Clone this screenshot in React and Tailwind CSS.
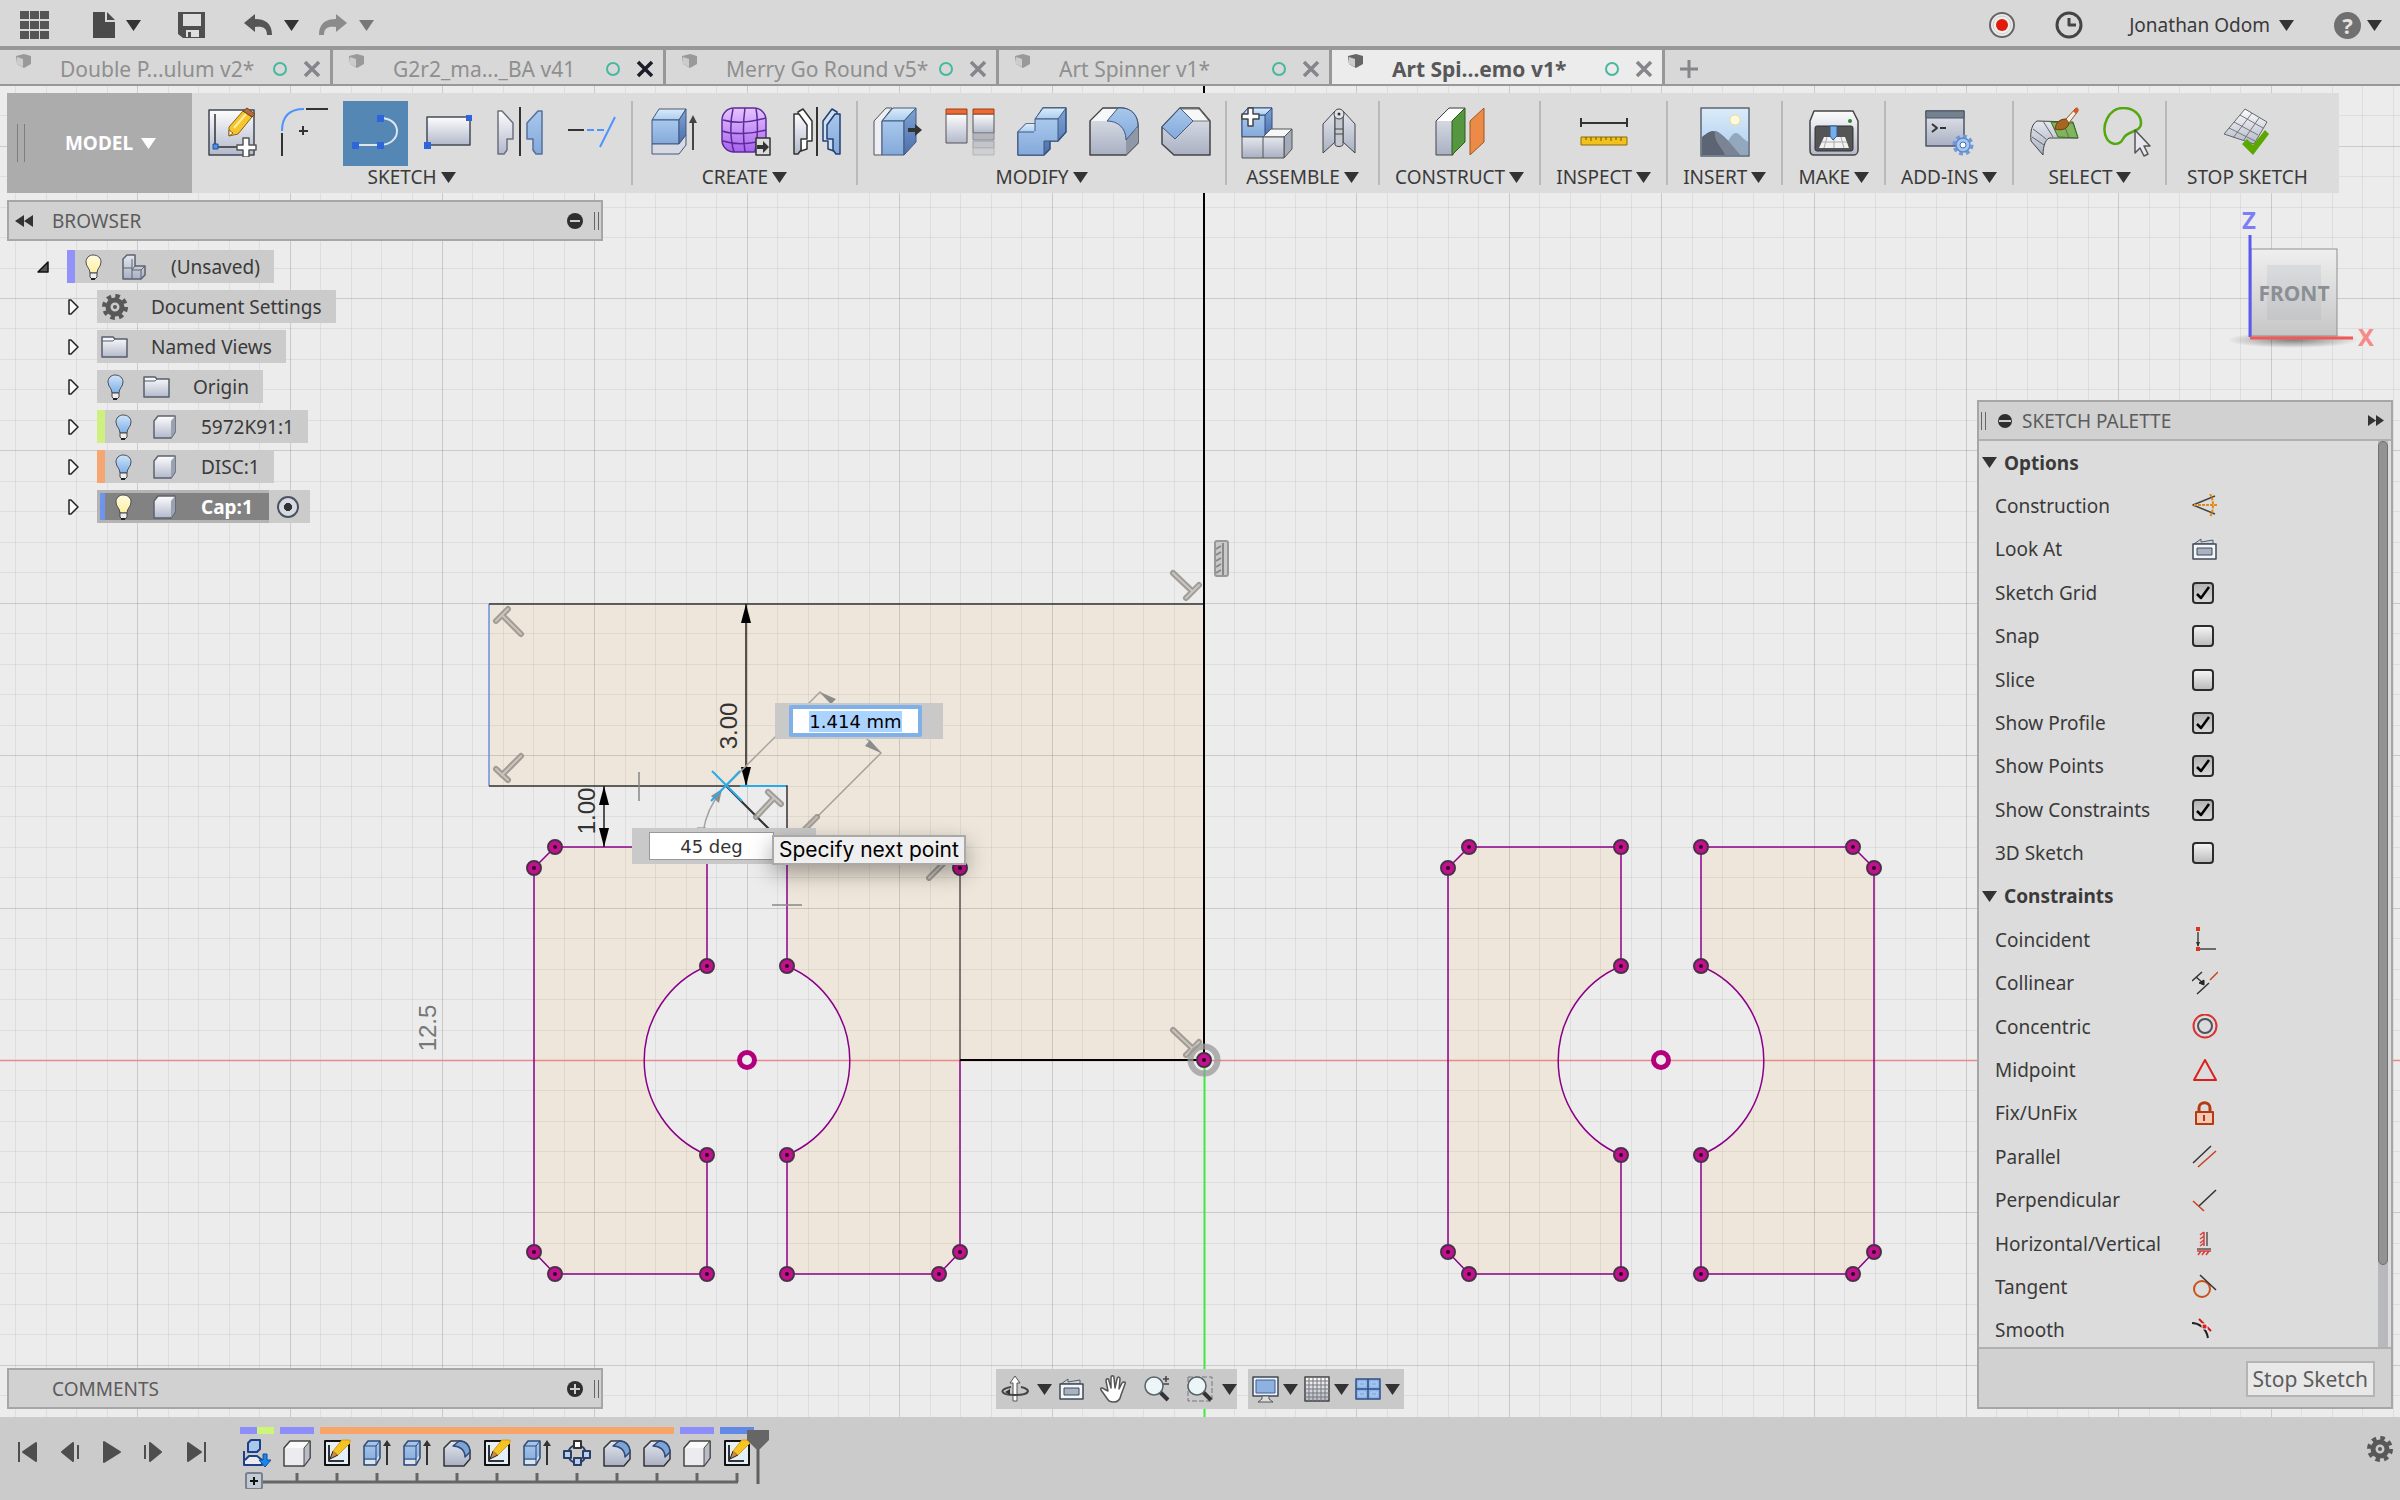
import { useEffect, useRef } from "react";

const ORIGIN = { x: 1204, y: 1060 };
const GRID_STEP = 30.48;

function Svg({ w = 50, h = 50, children, className = "" }) {
  return (
    <svg
      aria-hidden="true"
      width={w}
      height={h}
      viewBox={`0 0 ${w} ${h}`}
      fill="none"
      strokeLinejoin="round"
      className={`shrink-0 ${className}`}
    >
      {children}
    </svg>
  );
}

// Gradients shared by every icon on the page
function Gradients() {
  const stops = {
    face: ["#fdfdfe", "#b3b9cb"],
    steel: ["#e4e7ee", "#a9b0c2"],
    blue: ["#a8c8ec", "#84a9da"],
    deep: ["#7fa3d4", "#4a70ad"],
    sky: ["#dcebf9", "#a9cdf0"],
    purple: ["#e6c4ff", "#a763ee"],
    bulbOn: ["#fffbe0", "#fff0a0"],
    bulbOff: ["#cfe4fa", "#7fb0e6"],
    cube: ["#efefef", "#c6c6c6"],
  };
  return (
    <svg aria-hidden="true" width="0" height="0" className="absolute">
      <defs>
        {Object.entries(stops).map(([id, [from, to]]) => (
          <linearGradient key={id} id={id} x1="0" y1="0" x2="0" y2="1">
            <stop offset="0" stopColor={from} />
            <stop offset="1" stopColor={to} />
          </linearGradient>
        ))}
        <radialGradient id="cubeShadow">
          <stop offset="0" stopColor="#000" stopOpacity="0.45" />
          <stop offset="1" stopColor="#000" stopOpacity="0" />
        </radialGradient>
      </defs>
    </svg>
  );
}

function Caret({ color = "#333", className = "" }) {
  return (
    <Svg w={15} h={11} className={className}>
      <path d="M0 0h15L7.5 11z" fill={color} />
    </Svg>
  );
}

/* ---------- toolbar icons ---------- */

const NewSketchIcon = () => (
  <Svg>
    <rect x="2" y="3" width="45" height="45" fill="url(#face)" stroke="#3f4654" strokeWidth="1.5" />
    <path d="M8 7v33h26" stroke="#333" strokeWidth="1.5" />
    <rect x="6" y="37" width="5" height="5" fill="#4f93e8" stroke="#1d4f9c" />
    <path d="M22 20 36 4l9 6-14 17-9 2z" fill="#f7c42c" stroke="#8a6414" />
    <path d="m36 4 4-3 8 6-3 3z" fill="#b56b3d" stroke="#6f4222" />
    <path d="m27 21 12-14" stroke="#fff0a0" strokeWidth="2" />
    <path d="m22 23 4 3-4 3z" fill="#fff" stroke="#8a6414" />
    <path d="M36 31h6v7h7v5h-7v7h-6v-7h-6v-5h6z" fill="#fff" stroke="#555" strokeWidth="1.5" />
  </Svg>
);

const FilletArcIcon = () => (
  <Svg>
    <path d="M3 24C3 10 10 2 25 2" stroke="#4f93ff" strokeWidth="2" />
    <path d="M27 2h22M3 26v23M24 19v9M20 24h9" stroke="#333" strokeWidth="2" />
  </Svg>
);

const LineIcon = () => (
  <Svg>
    <path d="M5 38h24c11 0 17-7 17-14S40 11 29 11" stroke="#dde5f0" strokeWidth="2" />
    <path d="M1 35h7v7H1zM26 35h7v7h-7zM26 8h7v7h-7z" fill="#2f64dc" />
  </Svg>
);

const RectangleIcon = () => (
  <Svg>
    <rect x="4" y="10" width="43" height="28" fill="url(#face)" stroke="#444b58" strokeWidth="1.5" />
    <path d="M1 35h7v7H1zM43 8h6v6h-6z" fill="#2f64dc" />
  </Svg>
);

const MirrorIcon = () => (
  <Svg>
    <path d="M3 4h4l11 12v16h-6v11l-3 4H3z" fill="url(#face)" stroke="#6a707e" strokeWidth="1.5" />
    <path d="M47 4h-4L32 16v16h6v11l3 4h6z" fill="url(#blue)" stroke="#55709a" strokeWidth="1.5" />
    <path d="M25 0v49" stroke="#333" strokeWidth="2" />
  </Svg>
);

const TrimIcon = () => (
  <Svg>
    <path d="M1 23h16" stroke="#333" strokeWidth="2" />
    <path d="M20 23h7m3 0h7M33 40 48 10" stroke="#4f93ff" strokeWidth="2" />
  </Svg>
);

const ExtrudeIcon = () => (
  <Svg>
    <path d="M4 13 11 2h27l-7 11z" fill="url(#sky)" stroke="#42597f" />
    <path d="M4 13h27v24H4z" fill="url(#blue)" stroke="#42597f" />
    <path d="m31 13 7-11v26l-7 9z" fill="url(#deep)" stroke="#42597f" />
    <path d="M4 37h27l7-9v10l-7 9H4z" fill="#d7dae3" stroke="#42597f" />
    <path d="M45 43V14" stroke="#444" strokeWidth="2" />
    <path d="m41 16 4-8 4 8z" fill="#444" />
  </Svg>
);

const FormIcon = () => (
  <Svg w={52}>
    <rect x="3" y="1" width="44" height="44" rx="12" fill="url(#purple)" stroke="#5c2a99" strokeWidth="1.5" />
    <path
      d="M4 13c10 3 25 3 43-2M3 24c12 4 30 3 44-1M4 34c12 4 28 3 42-1M14 2c-3 12-3 30 1 43M26 1c-2 14-2 30 0 44M37 2c2 10 2 30-1 42"
      stroke="#5c2a99"
      strokeWidth="1.5"
    />
    <rect x="37" y="31" width="14" height="17" fill="#ddd" stroke="#333" strokeWidth="1.5" />
    <path d="M38 38h6v-4l6 6-6 6v-4h-6z" fill="#333" />
  </Svg>
);

const MirrorSolidIcon = () => (
  <Svg>
    <path d="M6 5 11 2l9 12v20h-5v8l-6 2z" fill="#fff" stroke="#333" strokeWidth="1.5" />
    <path d="M2 7h5l8 11v14h-6v11l-3 4H2z" fill="url(#face)" stroke="#333" strokeWidth="1.5" />
    <path d="m45 5-5-3-9 12v20h5v8l6 2z" fill="#cfe0f5" stroke="#223f70" strokeWidth="1.5" />
    <path d="M48 7h-5l-8 11v14h6v11l3 4h4z" fill="url(#blue)" stroke="#223f70" strokeWidth="1.5" />
    <path d="M25 0v49" stroke="#333" strokeWidth="2" />
  </Svg>
);

const PressPullIcon = () => (
  <Svg>
    <path d="M1 14 13 1h6L9 14v34H1z" fill="#edeff4" stroke="#555" />
    <path d="M9 14 20 1h23L31 14z" fill="url(#sky)" stroke="#42597f" />
    <path d="M9 14h22v34H9z" fill="url(#blue)" stroke="#42597f" />
    <path d="M31 14 43 1v34L31 48z" fill="url(#deep)" stroke="#42597f" />
    <path d="M35 21h7v-4l7 6-7 6v-4h-7z" fill="#333" />
  </Svg>
);

const AlignIcon = () => (
  <Svg>
    <rect x="1" y="7" width="21" height="29" fill="url(#face)" stroke="#555" />
    <rect x="28" y="7" width="21" height="19" fill="url(#face)" stroke="#555" />
    <path d="M1 2h21v5H1zM28 2h21v5H28z" fill="#ec6a35" stroke="#a13c12" />
    <path d="M28 26h21v7H28z" fill="#b4b6bc" stroke="#8a8d95" />
    <path d="M28 34h21v7H28z" fill="#c4c5c9" stroke="#a0a2a8" />
    <path d="M28 41h21v7H28z" fill="#cfd0d2" stroke="#b4b5b9" />
  </Svg>
);

const CombineIcon = () => (
  <Svg>
    <path d="m1 25 8-8h10v-5l7-11h23v24l-8 9h-8v8l-6 6H1z" fill="url(#deep)" stroke="#2f4d80" strokeWidth="1.5" />
    <path d="m1 25 8-8h10v8z" fill="url(#sky)" />
    <path d="m18 12 8-11h23l-8 11z" fill="url(#sky)" stroke="#42597f" />
    <path d="M1 25h17V12h23v22H27v14H1z" fill="url(#blue)" stroke="#42597f" />
    <path d="M18 26v-1h1v-1" stroke="#9dbfe8" strokeWidth="2" />
  </Svg>
);

const FilletIcon = () => (
  <Svg>
    <path d="M1 14 14 1h17c12 0 18 9 18 18v17L37 48H1z" fill="url(#steel)" stroke="#444" strokeWidth="1.5" />
    <path d="M2 14 14 2h14L18 14z" fill="#f6f7f9" />
    <path d="M37 32 49 20v16L37 48z" fill="#8e98a6" />
    <path d="M18 14 29 1h3c12 0 17 9 17 18L37 33c0-12-8-19-19-19z" fill="url(#blue)" stroke="#42597f" />
  </Svg>
);

const ChamferIcon = () => (
  <Svg>
    <path d="M1 20 19 1h19l11 13v34H13L1 37z" fill="url(#steel)" stroke="#444" strokeWidth="1.5" />
    <path d="M19 2h19l10 12H31z" fill="#f6f7f9" stroke="#777" />
    <path d="M1 20 19 1l13 13-18 18z" fill="url(#blue)" stroke="#42597f" />
  </Svg>
);

const ComponentIcon = () => (
  <Svg w={52} h={54}>
    <path d="m1 8 6-7h24v21l-6 8H1z" fill="url(#deep)" stroke="#2f4d80" />
    <path d="M1 8h23v22H1z" fill="url(#blue)" stroke="#2f4d80" />
    <path d="m1 8 6-7h24l-7 7z" fill="url(#sky)" stroke="#2f4d80" />
    <path d="M22 30 30 22h21L43 30z" fill="#f6f7f9" stroke="#555" />
    <path d="m43 30 8-8v20l-8 9z" fill="#a4abb9" stroke="#555" />
    <path d="M1 30h42v21H1zM22 30v21" fill="url(#steel)" stroke="#555" />
    <path d="M7 1h5v6h6v5h-6v7H7v-7H1V7h6z" fill="#fff" stroke="#444" strokeWidth="1.5" />
  </Svg>
);

const JointIcon = () => (
  <Svg>
    <path d="M9 17 21 4v31L9 46z" fill="url(#steel)" stroke="#444" />
    <path d="M41 17 29 4v31l12 11z" fill="url(#steel)" stroke="#444" />
    <path d="M21 8v30c2 2 6 2 8 0V8z" fill="#c3c8d3" stroke="#444" />
    <path d="M21 22h8M21 27h8" stroke="#444" />
    <circle cx="25" cy="7" r="5" fill="#dfe2e8" stroke="#444" />
    <circle cx="25" cy="7" r="1.5" fill="#333" />
  </Svg>
);

const PlaneIcon = () => (
  <Svg>
    <path d="M1 14 14 1h16L18 14v34H1z" fill="url(#steel)" stroke="#444" />
    <path d="M2 14 14 2h15L18 14z" fill="#fff" />
    <path d="M17 14 30 1v34L17 48z" fill="#55963f" stroke="#2e5d20" />
    <path d="M35 14 49 1v34L35 48z" fill="#ec8b48" stroke="#a0541d" />
  </Svg>
);

const MeasureIcon = () => (
  <Svg>
    <path d="M2 16h46M2 11v9M48 11v9" stroke="#333" strokeWidth="2" />
    <rect x="2" y="30" width="46" height="8" fill="#f2c21b" stroke="#8b6a0a" />
    <path d="M7 30v3m5-3v4m5-4v3m5-3v4m5-4v3m5-3v4m5-4v3m5-3v4" stroke="#6f5508" />
  </Svg>
);

const ImageIcon = () => (
  <Svg>
    <rect x="1" y="1" width="48" height="48" fill="url(#sky)" stroke="#5b6574" strokeWidth="1.5" />
    <circle cx="35" cy="13" r="5" fill="#fffbe0" stroke="#f3dc86" />
    <path d="M26 38c4-8 7-12 10-12s6 5 12 9v13H30z" fill="#93a7bd" />
    <path d="M2 30c5-4 8-6 11-6 8 0 18 14 27 24H2z" fill="#5d6574" />
    <path d="M15 24c7 1 16 13 25 24H25c-3-8-12-14-10-24z" fill="#7b8495" />
  </Svg>
);

const PrinterIcon = () => (
  <Svg>
    <path d="M5 4h39l5 10v29c0 3-2 5-4 5H5c-3 0-4-2-4-5V14z" fill="url(#face)" stroke="#444" strokeWidth="1.5" />
    <rect x="6" y="19" width="38" height="25" rx="2" fill="#555" stroke="#333" />
    <path d="M15 30h21l4 11H10z" fill="#f2f2f2" />
    <path d="M13 35h25M25 30v11M18 30l-3 11M32 30l3 11" stroke="#aaa" />
    <path d="M21 19h7v10l-4 4-3-4z" fill="#76aee8" stroke="#2f5d96" />
    <circle cx="41" cy="14" r="2" fill="#2a8a2a" />
  </Svg>
);

const AddInsIcon = () => (
  <Svg>
    <rect x="2" y="4" width="38" height="35" fill="url(#steel)" stroke="#4c5666" strokeWidth="1.5" />
    <path d="M2 4h38v7H2z" fill="#74828f" stroke="#4c5666" />
    <path d="m8 17 5 4-5 4M16 21h6" stroke="#333" strokeWidth="2" />
    <circle cx="39" cy="38" r="9" stroke="#6f9ada" strokeWidth="3" strokeDasharray="4 3" />
    <circle cx="39" cy="38" r="7" fill="#a3c6f2" stroke="#5d89c8" strokeWidth="1.5" />
    <circle cx="39" cy="38" r="3" fill="#fff" stroke="#4771ae" />
  </Svg>
);

const SelectBrushIcon = () => (
  <Svg>
    <path d="m8 14 36 1 5 16H22c-5-1-8 8-8 17L2 34C1 24 3 17 8 14z" fill="url(#steel)" stroke="#444" />
    <path d="m22 15 22 1 5 15-20-1z" fill="#7fb55b" stroke="#3d6b24" />
    <path d="M4 22c4 3 8 6 13 10M14 14l10 16M3 30l12 8M34 15l6 16" stroke="#666" />
    <path d="M26 22c1-7 5-10 11-10l3 4c-1 6-7 8-14 6z" fill="#a8651f" stroke="#6b3d0e" />
    <path d="M37 12 47 1l2 3-9 12z" fill="#f2ece4" stroke="#8a5a2a" />
    <path d="m44 4 4-4 2 3-3 4z" fill="#d2592b" />
  </Svg>
);

const LassoIcon = () => (
  <Svg>
    <path
      d="M22 1c11 0 18 7 18 15 0 10-14 7-18 16-3 6-11 7-16 0C-1 19 8 1 22 1z"
      stroke="#54a80f"
      strokeWidth="2.5"
    />
    <path d="M34 23v23l5-5 4 8 4-2-4-8h6z" fill="#e6e8ee" stroke="#555" strokeWidth="1.5" />
  </Svg>
);

const StopSketchIcon = () => (
  <Svg>
    <path d="m23 2 22 13-13 22L2 27z" fill="url(#face)" stroke="#666" />
    <path d="m18 8 23 13M12 15l24 13M7 21l26 13M30 6 11 31M37 11 21 34" stroke="#777" />
    <path d="m20 37 5-5 6 6 12-15 4 4-16 21z" fill="#5aa800" />
  </Svg>
);

const toolGroups = [
  {
    label: "SKETCH",
    icons: [NewSketchIcon, FilletArcIcon, LineIcon, RectangleIcon, MirrorIcon, TrimIcon],
    names: ["Create sketch", "Arc", "Line", "Rectangle", "Mirror", "Trim"],
    active: 2,
  },
  { label: "CREATE", icons: [ExtrudeIcon, FormIcon, MirrorSolidIcon], names: ["Extrude", "Form", "Mirror body"] },
  {
    label: "MODIFY",
    icons: [PressPullIcon, AlignIcon, CombineIcon, FilletIcon, ChamferIcon],
    names: ["Press pull", "Align", "Combine", "Fillet", "Chamfer"],
  },
  { label: "ASSEMBLE", icons: [ComponentIcon, JointIcon], names: ["New component", "Joint"] },
  { label: "CONSTRUCT", icons: [PlaneIcon], names: ["Offset plane"] },
  { label: "INSPECT", icons: [MeasureIcon], names: ["Measure"] },
  { label: "INSERT", icons: [ImageIcon], names: ["Canvas"] },
  { label: "MAKE", icons: [PrinterIcon], names: ["3D print"] },
  { label: "ADD-INS", icons: [AddInsIcon], names: ["Scripts"] },
  { label: "SELECT", icons: [SelectBrushIcon, LassoIcon], names: ["Paint select", "Freeform select"] },
];

function ToolButton({ icon: Icon, name, active }) {
  return (
    <button
      type="button"
      aria-label={name}
      className={`flex h-[65px] w-[65px] justify-center pt-[6px] ${active ? "bg-[#5487b4]" : ""}`}
    >
      <Icon />
    </button>
  );
}

function ToolGroup({ group }) {
  return (
    <div className="flex">
      <div className="flex flex-col items-center px-[7px] pt-2">
        <div className="flex gap-[7px]">
          {group.icons.map((icon, i) => (
            <ToolButton key={group.names[i]} icon={icon} name={group.names[i]} active={group.active === i} />
          ))}
        </div>
        <button type="button" className="flex items-center gap-1 px-2 leading-[23px]">
          {group.label}
          <Caret />
        </button>
      </div>
      <span className="my-2 w-[2px] bg-[#b9b9b9]" />
    </div>
  );
}

function Toolbar() {
  return (
    <div className="flex h-[100px] w-fit bg-[#dcdcdc]">
      <div className="flex w-[185px] items-center bg-[#acacac] pl-[10px]">
        <span className="h-[38px] w-2 border-x border-[#7d7d7d]" />
        <button type="button" className="flex flex-1 items-center justify-center gap-2 pl-1 font-bold text-white">
          MODEL
          <Caret color="#fff" />
        </button>
      </div>
      {toolGroups.map((group) => (
        <ToolGroup key={group.label} group={group} />
      ))}
      <div className="flex w-[172px] flex-col items-center pr-3 pt-2">
        <ToolButton icon={StopSketchIcon} name="Stop sketch tool" />
        <button type="button" className="leading-[23px]">
          STOP SKETCH
        </button>
      </div>
    </div>
  );
}

/* ---------- title bar and document tabs ---------- */

function TitleBar() {
  return (
    <header className="flex h-[46px] items-center justify-between bg-[#d8d8d8] pl-5 pr-[18px] pt-1">
      <div className="flex items-center">
        <button type="button" aria-label="Data panel">
          <Svg w={30} h={30}>
            {[0, 10, 20].map((y) =>
              [0, 10, 20].map((x) => <rect key={`${x}-${y}`} x={x} y={y + 1} width="9" height="8" fill="#555" />)
            )}
          </Svg>
        </button>
        <button type="button" aria-label="File" className="ml-[43px] flex items-center gap-[10px]">
          <Svg w={23} h={28}>
            <path d="M0 1h12v10h10v16H0z" fill="#4a4a4a" />
            <path d="m14 1 8 8h-8z" fill="#4a4a4a" />
          </Svg>
          <Caret />
        </button>
        <button type="button" aria-label="Save" className="ml-[37px]">
          <Svg w={28} h={28}>
            <path d="M0 1h27v26H5l-5-4z" fill="#4f4f4f" />
            <path d="M5 3h18v12H5zM8 19h13v7H8z" fill="#dedede" />
            <path d="M10 21h3v5h-3z" fill="#4f4f4f" />
          </Svg>
        </button>
        <button type="button" aria-label="Undo" className="ml-[38px] flex items-center gap-3">
          <Svg w={28} h={22}>
            <path d="M0 9 11 0v5c10 0 17 4 17 16h-5c0-7-4-9-12-8v5z" fill="#555" />
          </Svg>
          <Caret />
        </button>
        <button type="button" aria-label="Redo" className="ml-[20px] flex items-center gap-3">
          <Svg w={28} h={22}>
            <path d="M28 9 17 0v5C7 5 0 9 0 21h5c0-7 4-9 12-8v5z" fill="#8b8b8b" />
          </Svg>
          <Caret color="#777" />
        </button>
      </div>
      <div className="flex items-center">
        <button type="button" aria-label="Record">
          <Svg w={28} h={28}>
            <circle cx="14" cy="14" r="12" fill="#eee" stroke="#666" strokeWidth="2" />
            <circle cx="14" cy="14" r="9" stroke="#ccc" />
            <circle cx="14" cy="14" r="6" fill="#e01b0c" />
          </Svg>
        </button>
        <button type="button" aria-label="Job status" className="ml-[39px]">
          <Svg w={28} h={28}>
            <circle cx="14" cy="14" r="12" stroke="#444" strokeWidth="3" />
            <path d="M14 7v7h7" stroke="#444" strokeWidth="3" />
          </Svg>
        </button>
        <button type="button" className="ml-[46px] flex items-center gap-[9px]">
          Jonathan Odom
          <Caret />
        </button>
        <button type="button" aria-label="Help" className="ml-[40px] flex items-center gap-[6px]">
          <span className="grid h-[27px] w-[27px] place-items-center rounded-full bg-[#707070] text-[22px] font-bold leading-none text-[#e2e2e2]">
            ?
          </span>
          <Caret />
        </button>
      </div>
    </header>
  );
}

const tabs = [
  { title: "Double P...ulum v2*", close: "#85858c" },
  { title: "G2r2_ma..._BA v41", close: "#1c1c2a" },
  { title: "Merry Go Round v5*", close: "#85858c" },
  { title: "Art Spinner v1*", close: "#85858c" },
  { title: "Art Spi...emo v1*", close: "#85858c", active: true },
];

function DocumentTabs() {
  return (
    <nav className="flex h-10 border-b-2 border-t-4 border-[#989898] bg-[#d8d8d8]">
      {tabs.map((tab) => (
        <div
          key={tab.title}
          className={`flex w-[333px] items-center border-r-[3px] border-[#989898] pl-4 pr-[9px] pt-1 ${
            tab.active ? "bg-[#ececec] font-bold text-[#585858]" : "text-[#8f8f8f]"
          }`}
        >
          <Svg w={15} h={15} className="self-start">
            <path d="M0 2 8 0l7 2v8l-7 4-7-4z" fill={tab.active ? "#666" : "#999"} />
            <path d="m1 3 6 2v8l-6-3z" fill="#ccc" />
          </Svg>
          <a href="#" className="ml-[29px] flex-1 text-[21px]">
            {tab.title}
          </a>
          <span className="h-[14px] w-[14px] rounded-full border-2 border-[#45b99f]" />
          <button type="button" aria-label={`Close ${tab.title}`} className="ml-4">
            <Svg w={18} h={18}>
              <path d="m2 2 14 14M16 2 2 16" stroke={tab.close} strokeWidth="3.5" />
            </Svg>
          </button>
        </div>
      ))}
      <button type="button" aria-label="New tab" className="ml-[14px] pt-1">
        <Svg w={20} h={20}>
          <path d="M10 1v18M1 10h18" stroke="#85858c" strokeWidth="3" />
        </Svg>
      </button>
    </nav>
  );
}

/* ---------- browser tree ---------- */

const BulbIcon = ({ on }) => (
  <Svg w={18} h={28}>
    <path
      d="M9 2c5 0 8 3 8 7 0 5-4 6-4 11H6c0-5-4-6-4-11 0-4 3-7 7-7z"
      fill={on ? "url(#bulbOn)" : "url(#bulbOff)"}
      stroke="#4a4f58"
    />
    <path d="M6 20h7v4l-2 2H8l-2-2z" fill="#eee" stroke="#444" />
    <path d="M7 26h4" stroke="#222" strokeWidth="2" />
  </Svg>
);

const FolderIcon = () => (
  <Svg w={28} h={24}>
    <path d="M1 2h11l2 2h12v18H1z" fill="url(#face)" stroke="#555e6e" strokeWidth="1.5" />
    <path d="M1 6h11l2-2" stroke="#555e6e" />
  </Svg>
);

const BodyIcon = () => (
  <Svg w={24} h={24}>
    <path d="m1 6 4-5h17v16l-4 6H1z" fill="url(#face)" stroke="#5b6270" strokeWidth="1.5" />
    <path d="m18 6 4-5v16l-4 6z" fill="#9aa1b0" />
  </Svg>
);

const AssemblyIcon = () => (
  <Svg w={26} h={26}>
    <path d="m1 5 4-4h8v11h10v9l-4 4H1z" fill="url(#steel)" stroke="#5b6270" strokeWidth="1.5" />
    <path d="M1 14h9M10 5v20M10 16l3-4M19 16H10M19 16l4-4M19 16v9" stroke="#5b6270" />
  </Svg>
);

const GearIcon = () => (
  <Svg w={28} h={28}>
    <circle cx="14" cy="14" r="11" stroke="#585858" strokeWidth="4" strokeDasharray="4.5 4.14" />
    <circle cx="14" cy="14" r="7" stroke="#585858" strokeWidth="5" />
    <circle cx="14" cy="14" r="2" fill="#585858" />
  </Svg>
);

const tree = [
  { label: "Document Settings", icon: GearIcon },
  { label: "Named Views", icon: FolderIcon },
  { label: "Origin", icon: FolderIcon, bulb: true },
  { label: "5972K91:1", icon: BodyIcon, bulb: true, strip: "bg-[#cff07f]" },
  { label: "DISC:1", icon: BodyIcon, bulb: true, strip: "bg-[#f5a673]" },
];

function PanelHeader({ title, open }) {
  return (
    <div className="flex h-[41px] items-center border-2 border-[#a6a6a6] bg-[#d1d1d1] pr-[2px] text-[#5c5c5c]">
      <span className="w-[43px] pl-[6px]">
        {open && (
          <Svg w={18} h={12}>
            <path d="M9 0v12L0 6zM18 0v12L9 6z" fill="#333" />
          </Svg>
        )}
      </span>
      <h2 className="flex-1">{title}</h2>
      <button type="button" aria-label={`Toggle ${title.toLowerCase()}`} className="mr-[11px]">
        <Svg w={16} h={16}>
          <circle cx="8" cy="8" r="8" fill="#2e2e2e" />
          <path d={open ? "M3 8h10" : "M3 8h10M8 3v10"} stroke="#ccc" strokeWidth="2" />
        </Svg>
      </button>
      <span className="h-[18px] w-[5px] border-x border-[#666]" />
    </div>
  );
}

function Expander() {
  return (
    <button type="button" aria-label="Expand" className="mr-[18px]">
      <Svg w={11} h={16}>
        <path d="M1 1h2l7 7-7 7H1z" fill="#fafafa" stroke="#222" strokeWidth="1.5" />
      </Svg>
    </button>
  );
}

function BrowserPanel() {
  return (
    <section className="w-[596px]">
      <PanelHeader title="BROWSER" open />
      <ul className="mt-[9px] flex flex-col gap-[7px] text-[#3a3a3a]">
        <li className="flex h-[33px] items-center pl-[30px]">
          <button type="button" aria-label="Collapse" className="mr-[18px]">
            <Svg w={12} h={12}>
              <path d="M11 1v10H1z" fill="#555" stroke="#111" strokeWidth="1.5" />
            </Svg>
          </button>
          <div className="flex h-full items-center bg-[#cbcbcb] pr-[14px]">
            <span className="h-full w-2 bg-[#9292fb]" />
            <span className="grid w-9 place-items-center">
              <BulbIcon on />
            </span>
            <span className="grid w-12 place-items-center">
              <AssemblyIcon />
            </span>
            <span className="pl-3">(Unsaved)</span>
          </div>
        </li>
        {tree.map(({ label, icon: Icon, bulb, strip }) => (
          <li key={label} className="flex h-[33px] items-center pl-[61px]">
            <Expander />
            <div className="flex h-full items-center bg-[#cbcbcb] pr-[14px]">
              {strip && <span className={`h-full w-2 ${strip}`} />}
              {bulb && (
                <span className="grid w-9 place-items-center">
                  <BulbIcon />
                </span>
              )}
              <span className={`grid place-items-center ${bulb ? "w-12" : "w-9"}`}>
                <Icon />
              </span>
              <span className={bulb ? "pl-3" : "pl-[18px]"}>{label}</span>
            </div>
          </li>
        ))}
        <li className="flex h-[33px] items-center pl-[61px]">
          <Expander />
          <div className="flex h-full items-center bg-[#cbcbcb] pr-[11px]">
            <div className="mr-2 flex h-full items-center border-y-[3px] border-l-[3px] border-[#b4b4b4] bg-[#828282] pr-4 font-bold text-white">
              <span className="h-full w-[5px] bg-[#6f94ec]" />
              <span className="grid w-9 place-items-center">
                <BulbIcon on />
              </span>
              <span className="grid w-12 place-items-center">
                <BodyIcon />
              </span>
              <span className="pl-3">Cap:1</span>
            </div>
            <input
              type="radio"
              name="activeComponent"
              aria-label="Activate Cap:1"
              defaultChecked
              className="h-[22px] w-[22px] appearance-none rounded-full border-2 border-[#4b5260] bg-[radial-gradient(circle,#333_30%,#d5dae3_34%)]"
            />
          </div>
        </li>
      </ul>
    </section>
  );
}

/* ---------- sketch palette ---------- */

const LookAtIcon = () => (
  <Svg w={26} h={24}>
    <path d="m2 7 7-5v3l12-2v4z" fill="#cfd3da" stroke="#555e6a" />
    <path d="M1 7h23v15H1z" fill="#f4f6f8" stroke="#3e4958" strokeWidth="1.5" />
    <path d="M5 11h15v7H5z" fill="#a9b2bf" stroke="#3e4958" />
  </Svg>
);

const ConstructionIcon = () => (
  <Svg w={26} h={24}>
    <path d="M23 2 1 11l22 9" stroke="#444" strokeWidth="1.5" />
    <path d="M2 11h23M18 0c4 6 4 16 0 23" stroke="#e38a1c" strokeWidth="2" strokeDasharray="3 1" />
  </Svg>
);

const options = [
  { label: "Sketch Grid", checked: true },
  { label: "Snap" },
  { label: "Slice" },
  { label: "Show Profile", checked: true },
  { label: "Show Points", checked: true },
  { label: "Show Constraints", checked: true },
  { label: "3D Sketch" },
];

const constraints = [
  {
    label: "Coincident",
    art: (
      <>
        <path d="M6 5v14M6 22h18" stroke="#444" strokeWidth="1.5" />
        <path d="M4 15h4l-2 5z" fill="#333" />
        <path d="M4 0h4v4H4zM4 20h4v4H4z" fill="#d8361b" />
      </>
    ),
  },
  {
    label: "Collinear",
    art: (
      <>
        <path d="m0 10 10-9M4 6l7 6M5 23 17 12" stroke="#333" strokeWidth="1.5" />
        <path d="m7 12 5 2 0-5z" fill="#222" stroke="#222" />
        <path d="m18 9 8-8" stroke="#c8401a" strokeWidth="1.5" />
      </>
    ),
  },
  {
    label: "Concentric",
    art: (
      <>
        <circle cx="13" cy="12" r="11.5" stroke="#dc3030" strokeWidth="2" />
        <circle cx="13" cy="12" r="7" stroke="#4a5560" strokeWidth="2" />
      </>
    ),
  },
  { label: "Midpoint", art: <path d="M13 2 24 22H2z" stroke="#dc2020" strokeWidth="2" /> },
  {
    label: "Fix/UnFix",
    art: (
      <>
        <path d="M7 11V7c0-7 11-7 11 0v4" stroke="#b53a12" strokeWidth="3" />
        <rect x="4" y="11" width="17" height="12" fill="#f5c9b4" stroke="#b53a12" strokeWidth="2" />
        <path d="M12 14v6" stroke="#b53a12" strokeWidth="2" />
      </>
    ),
  },
  {
    label: "Parallel",
    art: (
      <>
        <path d="M1 19 19 2" stroke="#333" strokeWidth="1.5" />
        <path d="M6 23 24 7" stroke="#c8401a" strokeWidth="1.5" />
      </>
    ),
  },
  {
    label: "Perpendicular",
    art: (
      <>
        <path d="M7 18 24 2" stroke="#333" strokeWidth="1.5" />
        <path d="m1 13 11 10" stroke="#c8401a" strokeWidth="1.5" />
      </>
    ),
  },
  {
    label: "Horizontal/Vertical",
    art: (
      <>
        <path d="M15 1v14M5 18h14" stroke="#555" strokeWidth="1.5" />
        <path
          d="M12 1v14M5 20h14M8 4l4-3M8 8l4-3M8 12l4-3M8 15l4-3M6 24l3-4M10 24l3-4M14 24l3-4"
          stroke="#dc3c3c"
          strokeWidth="1.5"
        />
      </>
    ),
  },
  {
    label: "Tangent",
    art: (
      <>
        <circle cx="10" cy="15" r="8" stroke="#c8521a" strokeWidth="2" />
        <path d="m8 1 16 15" stroke="#333" strokeWidth="1.5" />
      </>
    ),
  },
  {
    label: "Smooth",
    art: (
      <>
        <path d="M0 5c6 0 14 4 16 15" stroke="#222" strokeWidth="2" />
        <path d="m7 1 12 12" stroke="#cc1a1a" strokeWidth="2" />
        <path d="M10 6h5v5h-5z" fill="#dc2020" stroke="#fff" />
      </>
    ),
  },
];

function PaletteHeading({ children }) {
  return (
    <h3 className="flex items-center gap-[7px] pl-[3px] font-bold">
      <Caret />
      {children}
    </h3>
  );
}

function PaletteCommand({ label, children }) {
  return (
    <button type="button" className="grid grid-cols-[197px_1fr] items-center pl-4 text-left">
      {label}
      {children}
    </button>
  );
}

function SketchPalette() {
  return (
    <section className="flex min-h-0 w-[416px] flex-1 flex-col border-2 border-[#a6a6a6] bg-[#dcdcdc] text-[#3a3a3a]">
      <div className="flex h-[39px] items-center border-b-2 border-[#b0b0b0] bg-[#d1d1d1] pl-[2px] pr-[7px] text-[#5c5c5c]">
        <span className="mr-3 h-[18px] w-[5px] border-x border-[#666]" />
        <Svg w={14} h={14}>
          <circle cx="7" cy="7" r="7" fill="#2e2e2e" />
          <path d="M1 7h12" stroke="#ccc" strokeWidth="2" />
        </Svg>
        <h2 className="flex-1 pl-[10px]">SKETCH PALETTE</h2>
        <Svg w={16} h={11}>
          <path d="M0 0v11l8-5.5zM8 0v11l8-5.5z" fill="#333" />
        </Svg>
      </div>
      <div className="flex min-h-0 flex-1 overflow-hidden">
        <div className="-mb-[5px] grid flex-1 auto-rows-fr">
          <PaletteHeading>Options</PaletteHeading>
          <PaletteCommand label="Construction">
            <ConstructionIcon />
          </PaletteCommand>
          <PaletteCommand label="Look At">
            <LookAtIcon />
          </PaletteCommand>
          {options.map((option) => (
            <label key={option.label} className="grid grid-cols-[197px_22px] items-center pl-4">
              {option.label}
              <input
                type="checkbox"
                defaultChecked={option.checked}
                className="peer col-start-2 row-start-1 h-[22px] w-[22px] appearance-none rounded border-2 border-[#2c2c2c] bg-linear-to-b from-[#f4f4f4] to-[#bdbdbd] checked:from-[#b4b4b4] checked:to-[#d8d8d8]"
              />
              <Svg w={22} h={22} className="pointer-events-none relative col-start-2 row-start-1 hidden peer-checked:block">
                <path d="m5 12 4 4 8-11" stroke="#000" strokeWidth="2.5" />
              </Svg>
            </label>
          ))}
          <PaletteHeading>Constraints</PaletteHeading>
          {constraints.map((item) => (
            <PaletteCommand key={item.label} label={item.label}>
              <Svg w={26} h={25}>
                {item.art}
              </Svg>
            </PaletteCommand>
          ))}
        </div>
        <div className="mr-[3px] w-[10px] bg-[#b7b9bc]">
          <div className="h-[91%] rounded-full border border-[#6f6f6f] bg-[#929292]" />
        </div>
      </div>
      <div className="flex h-[60px] items-center justify-end border-t-2 border-[#b0b0b0] bg-[#d1d1d1] pr-4 pt-[2px]">
        <button
          type="button"
          className="h-9 border-2 border-[#b4b4b4] bg-[#e8e8e8] px-[5px] text-[21px] leading-none text-[#5c5c5c]"
        >
          Stop Sketch
        </button>
      </div>
    </section>
  );
}

function ViewCube() {
  return (
    <svg role="img" aria-label="View cube, front" width="184" height="200" viewBox="2209 200 184 200">
      <ellipse cx="2293" cy="340" rx="66" ry="8" fill="url(#cubeShadow)" />
      <rect x="2251" y="249" width="86" height="87" fill="url(#cube)" stroke="#8f8f8f" />
      <rect x="2267" y="265" width="54" height="55" fill="#8f98a8" opacity="0.15" />
      <text x="2294" y="301" textAnchor="middle" className="fill-[#8b8f94] text-[21px] font-bold">
        FRONT
      </text>
      <path d="M2250 235v102" stroke="#5a5af0" strokeWidth="3" />
      <path d="M2250 338h103" stroke="#f05a55" strokeWidth="3" />
      <text x="2249" y="229" textAnchor="middle" className="fill-[#7d7df5] text-[24px] font-bold">
        Z
      </text>
      <text x="2366" y="346" textAnchor="middle" className="fill-[#f58a86] text-[24px] font-bold">
        X
      </text>
    </svg>
  );
}

/* ---------- navigation bar ---------- */

const OrbitIcon = () => (
  <Svg w={28} h={28}>
    <path d="M12 26V8H9l5-7 5 7h-3v18z" fill="#fff" stroke="#555" />
    <path d="M10 12c-12 2-12 8 4 8s16-6 6-8" stroke="#444" strokeWidth="2" />
    <path d="m4 17 5-3v6z" fill="#333" />
  </Svg>
);

const HandIcon = () => (
  <Svg w={28} h={28}>
    <path
      d="M8 16 6 6c0-3 3-3 3 0l2 7V3c0-3 3-3 3 0l1 10 2-9c1-3 3-2 3 0l-1 10 3-6c2-2 4-1 3 1l-4 11c-1 5-3 7-7 7-5 0-6-2-8-5l-5-7c-1-2 1-3 3-1z"
      fill="#fff"
      stroke="#555"
      strokeWidth="1.5"
    />
  </Svg>
);

const ZoomIcon = ({ frame }) => (
  <Svg w={28} h={28}>
    {frame ? (
      <path d="M2 2h24v24H2z" stroke="#777" strokeDasharray="5 2" />
    ) : (
      <path d="M20 4h6M23 1v6M20 9h6" stroke="#444" strokeWidth="1.5" />
    )}
    <path d="m17 17 8 8" stroke="#333" strokeWidth="4" />
    <circle cx="11" cy="11" r="9" fill="#edf6f6" stroke="#59636e" strokeWidth="1.5" />
  </Svg>
);

const DisplayIcon = () => (
  <Svg w={27} h={28}>
    <rect x="1" y="2" width="25" height="19" fill="#eef0f3" stroke="#3e4958" strokeWidth="1.5" />
    <rect x="4" y="5" width="19" height="13" fill="#8db2e2" stroke="#3d5f96" />
    <path d="M10 21h7v3l4 3H6l4-3z" fill="#ddd" stroke="#555" />
  </Svg>
);

const GridIcon = () => (
  <Svg w={26} h={28}>
    <rect x="1" y="2" width="24" height="24" fill="url(#face)" stroke="#444" strokeWidth="1.5" />
    <path d="M5 2v24M9 2v24M13 2v24M17 2v24M21 2v24M1 6h24M1 10h24M1 14h24M1 18h24M1 22h24" stroke="#777" />
  </Svg>
);

const ViewportsIcon = () => (
  <Svg w={26} h={28}>
    <rect x="1" y="4" width="24" height="20" fill="#8db4e6" stroke="#2f4f84" strokeWidth="1.5" />
    <path d="M13 4v20M1 14h24" stroke="#2f4f84" strokeWidth="1.5" />
    <path d="M4 7h6v4H4zM16 7h6v4h-6zM4 17h6v4H4zM16 17h6v4h-6z" stroke="#b8d2f4" />
  </Svg>
);

function NavBar() {
  return (
    <div className="flex h-10 gap-[11px] self-end">
      <div className="flex items-center gap-[15px] bg-[#c9c9c9] pl-[5px]">
        <button type="button" aria-label="Orbit" className="flex items-center gap-2">
          <OrbitIcon />
          <Caret />
        </button>
        <button type="button" aria-label="Look at" className="-ml-2">
          <LookAtIcon />
        </button>
        <button type="button" aria-label="Pan">
          <HandIcon />
        </button>
        <button type="button" aria-label="Zoom">
          <ZoomIcon />
        </button>
        <button type="button" aria-label="Zoom window" className="flex items-center gap-2">
          <ZoomIcon frame />
          <Caret />
        </button>
      </div>
      <div className="flex items-center gap-[6px] bg-[#c9c9c9] px-1">
        {[DisplayIcon, GridIcon, ViewportsIcon].map((Icon, i) => (
          <button
            key={i}
            type="button"
            aria-label={["Display settings", "Grid and snaps", "Viewports"][i]}
            className="flex items-center gap-1"
          >
            <Icon />
            <Caret />
          </button>
        ))}
      </div>
    </div>
  );
}

/* ---------- sketch canvas ---------- */

const range = (from, to) => Array.from({ length: to - from + 1 }, (_, i) => from + i);

function Point({ x, y }) {
  return (
    <g>
      <circle cx={x} cy={y} r="7" fill="#c4108f" stroke="#4b3049" strokeWidth="2" />
      <circle cx={x} cy={y} r="2" fill="#2a0a20" />
    </g>
  );
}

// Perpendicular mark: a stem with a bar across its head
function Perp({ d }) {
  return (
    <g strokeLinecap="round" opacity="0.85">
      <path d={d} stroke="#938f89" strokeWidth="6" />
      <path d={d} stroke="#c4bfb8" strokeWidth="2" />
    </g>
  );
}

function Arrow({ x, y, down }) {
  return <path d={down ? `M${x} ${y}l-5-19h10z` : `M${x} ${y}l-5 19h10z`} fill="#000" />;
}

const pinPoints = [
  [555, 847],
  [534, 868],
  [707, 966],
  [787, 966],
  [707, 1155],
  [787, 1155],
  [534, 1252],
  [555, 1274],
  [707, 1274],
  [787, 1274],
  [939, 1274],
  [960, 1252],
  [960, 868],
];

const LEFT_HALF = "M555 847H707V966A102.5 102.5 0 0 0 707 1155V1274H555L534 1252V868Z";
const RIGHT_HALF = "M787 847H939L960 868V1252L939 1274H787V1155A102.5 102.5 0 0 0 787 966Z";

function SketchDrawing() {
  return (
    <svg role="img" aria-label="Sketch" className="absolute inset-0 h-full w-full" fill="none">
      <g transform="translate(0 -86)">
        <g fill="#eee6da">
          <path d="M489 604H1204V1060H960V1252L939 1274H787V1155A102.5 102.5 0 0 0 787 966V786H489Z" />
          <path d={LEFT_HALF} />
          <path d={LEFT_HALF} transform="translate(914 0)" />
          <path d={RIGHT_HALF} transform="translate(914 0)" />
        </g>

        {range(-40, 40).map((i) => (
          <path
            key={`v${i}`}
            d={`M${Math.round(ORIGIN.x + i * GRID_STEP) + 0.5} 86V1420`}
            stroke="#000"
            strokeOpacity={i % 5 ? 0.06 : 0.14}
          />
        ))}
        {range(-32, 12).map((i) => (
          <path
            key={`h${i}`}
            d={`M0 ${Math.round(ORIGIN.y + i * GRID_STEP) + 0.5}H2400`}
            stroke="#000"
            strokeOpacity={i % 5 ? 0.06 : 0.14}
          />
        ))}

        <path d="M0 1060.5H2400" stroke="#e88a8a" strokeWidth="1.5" />
        <path d="M1204.5 1060V1420" stroke="#3ee83e" strokeWidth="2" />

        <g stroke="#8a008a" strokeWidth="1.5">
          <path d={LEFT_HALF} />
          <path d="M787 847V966A102.5 102.5 0 0 1 787 1155V1274H939L960 1252V1060" />
          <path d={LEFT_HALF} transform="translate(914 0)" />
          <path d={RIGHT_HALF} transform="translate(914 0)" />
        </g>

        <path d="M489 786V604" stroke="#6a8fe0" strokeWidth="1.5" />
        <path d="M489 604H1204M489 786H787V847" stroke="#333" strokeWidth="1.5" />
        <path d="M960 868V1060" stroke="#555" strokeWidth="1.5" />
        <path d="M960 1060H1204V86" stroke="#000" strokeWidth="2" />
        <path d="M639 772v29M772 905h30" stroke="#888" strokeWidth="1.5" />

        {/* dimensions */}
        <path d="M746 604V786M604 786V847" stroke="#222" strokeWidth="1.5" />
        <Arrow x={746} y={604} />
        <Arrow x={746} y={786} down />
        <Arrow x={604} y={786} />
        <Arrow x={604} y={847} down />
        <g textAnchor="middle" className="font-['Liberation_Sans'] text-[24px]">
          <text transform="translate(737 726) rotate(-90)" fill="#333">
            3.00
          </text>
          <text transform="translate(595 811) rotate(-90)" fill="#333">
            1.00
          </text>
          <text transform="translate(436 1028) rotate(-90)" fill="#777">
            12.5
          </text>
        </g>

        {/* line being drawn */}
        <g stroke="#a5a29e" strokeWidth="1.5">
          <path d="M726 786 820 692 881 753 800 834" />
          <path d="M703 832q4-24 18-40M697 828h9" />
        </g>
        <path d="m820 692 16 7-5 5zM881 753l-16-7 5-6zM722 789l-3 14-8-7z" fill="#8c8c8c" />
        <path d="m726 786 50 50" stroke="#333" strokeWidth="2" />
        <path d="m712 771 30 30M740 771l-29 30M740 786h46" stroke="#29abe8" strokeWidth="2" />

        <Perp d="m496 621 12-12M502 615l19 19" />
        <Perp d="m496 769 12 11M502 775l19-19" />
        <Perp d="m768 792 13 12M774 798l-18 19" />
        <Perp d="m1186 598 13-13M1192 591l-19-18" />
        <Perp d="m1186 1055 13-13M1192 1048l-19-18" />
        <Perp d="m929 878 18-18" />
        <Perp d="m800 834 17-17" />
        <rect x="1215" y="541" width="13" height="35" rx="2" fill="#c9c9c9" stroke="#999" strokeWidth="2" />
        <path
          d="M1223 543v32M1216 549l5-3M1216 555l5-3M1216 561l5-3M1216 567l5-3M1216 573l5-3"
          stroke="#888"
          strokeWidth="2"
        />

        {pinPoints.map(([x, y]) => (
          <Point key={`${x}-${y}`} x={x} y={y} />
        ))}
        {[...pinPoints, [707, 847], [787, 847], [939, 847]].map(([x, y]) => (
          <Point key={`r${x}-${y}`} x={x + 914} y={y} />
        ))}
        {[747, 1661].map((x) => (
          <circle key={x} cx={x} cy={ORIGIN.y} r="7.5" fill="#ececec" stroke="#b2007d" strokeWidth="5" />
        ))}
        <circle cx={ORIGIN.x} cy={ORIGIN.y} r="13.5" stroke="#999" strokeOpacity="0.75" strokeWidth="6" />
        <Point x={ORIGIN.x} y={ORIGIN.y} />
      </g>
    </svg>
  );
}

function DimensionInputs() {
  const lengthRef = useRef(null);

  useEffect(() => {
    lengthRef.current.focus();
    lengthRef.current.select();
  }, []);

  return (
    <div className="font-['DejaVu_Sans'] text-[18px]">
      <div className="absolute left-[775px] top-[617px] bg-[#c9c9c9] py-[2px] pl-[14px] pr-[21px]">
        <input
          ref={lengthRef}
          aria-label="Length"
          defaultValue="1.414 mm"
          className="block h-8 w-[133px] rounded-xs border-4 border-[#7fb0e8] bg-white text-center text-black outline-none selection:bg-[#abd3ff] selection:text-black"
        />
      </div>
      <div className="absolute left-[632px] top-[742px] bg-[#c9c9c9] py-1 pl-[17px] pr-[42px]">
        <input
          aria-label="Angle"
          defaultValue="45 deg"
          className="block h-7 w-[125px] border border-[#999] bg-white text-center text-[#333] outline-none"
        />
      </div>
      <div
        role="tooltip"
        className="absolute left-[772px] top-[749px] border-2 border-[#a9a9a9] bg-[#efefef] px-[5px] font-['Inter'] text-[21px] leading-[26px] text-black shadow-[0_8px_22px_rgba(0,0,0,0.35)]"
      >
        Specify next point
      </div>
    </div>
  );
}

/* ---------- timeline ---------- */

const TimelineSketch = () => (
  <Svg w={28} h={28}>
    <rect x="2" y="2" width="24" height="24" fill="#e3f0fa" stroke="#111" strokeWidth="2" />
    <path d="M6 6v16h15" stroke="#333" strokeWidth="2" />
    <path d="m7 20 3-8 5 4z" fill="#c98a4a" stroke="#222" />
    <path d="M10 12 19 1h8v3L15 16z" fill="#f5c324" stroke="#d89a12" />
  </Svg>
);

const TimelineExtrude = () => (
  <Svg w={28} h={28}>
    <path d="m1 7 4-5h12v17l-4 7H1z" fill="url(#blue)" stroke="#2f4a78" strokeWidth="1.5" />
    <path d="M2 21h11l3-5v3l-4 6H2z" fill="#dfe3ea" />
    <path d="M13 7v19M1 7h12l4-5M1 20h12" stroke="#2f4a78" />
    <path d="M24 26V6" stroke="#333" strokeWidth="2" />
    <path d="m20 7 4-6 4 6z" fill="#333" />
  </Svg>
);

const TimelineFillet = () => (
  <Svg w={28} h={28}>
    <path d="M1 9 8 2h9c6 0 10 5 10 11v7l-6 7H1z" fill="url(#steel)" stroke="#333" strokeWidth="1.5" />
    <path d="m10 7 6-5c7 0 11 5 11 11l-5 5c0-7-5-11-12-11z" fill="#7ea4d6" stroke="#2f4a78" strokeWidth="1.5" />
  </Svg>
);

const TimelineInsert = () => (
  <Svg w={28} h={28}>
    <path d="M1 12v14h18v-5L14 17H6L2 21" fill="#e8ebf2" stroke="#1f3f86" strokeWidth="2" />
    <path d="m5 4 3-3h9v9l-3 3H5z" fill="#a8c8ec" stroke="#1f3f86" strokeWidth="2" />
    <path d="M20 15h4v6h4l-6 7-6-7h4z" fill="#1b87ea" stroke="#0d4fa0" />
  </Svg>
);

const TimelinePattern = () => (
  <Svg w={28} h={28}>
    <circle cx="14" cy="15" r="9" stroke="#2a3f68" strokeWidth="2" />
    <path d="M11 2h7v7h-7z" fill="#fff" stroke="#333" strokeWidth="2" />
    <path d="M1 12h7v7H1zM20 12h7v7h-7zM11 19h7v7h-7z" fill="#b9cfec" stroke="#2a3f68" strokeWidth="2" />
  </Svg>
);

const TimelineBody = () => (
  <Svg w={28} h={28}>
    <path d="m1 9 6-7h20v17l-6 8H1z" fill="#fafafa" stroke="#444" strokeWidth="1.5" />
    <path d="m21 9 6-7v17l-6 8z" fill="#b9bcc4" stroke="#444" />
    <path d="M2 9h18v17H2z" fill="#ececf0" />
  </Svg>
);

const features = [
  TimelineInsert,
  TimelineBody,
  TimelineSketch,
  TimelineExtrude,
  TimelineExtrude,
  TimelineFillet,
  TimelineSketch,
  TimelineExtrude,
  TimelinePattern,
  TimelineFillet,
  TimelineFillet,
  TimelineBody,
  TimelineSketch,
];

const playback = [
  { name: "Go to start", d: "M3 2v20M20 3v18L7 12z" },
  { name: "Step back", d: "M20 5v14M15 3v18L4 12z" },
  { name: "Play", d: "M4 2v20l16-10z" },
  { name: "Step forward", d: "M3 5v14M8 3v18l11-9z" },
  { name: "Go to end", d: "M21 2v20M4 3v18l13-9z" },
];

function Timeline() {
  return (
    <footer className="flex h-[83px] bg-[#cbcbcb] pl-[7px] pr-[6px] pt-[10px]">
      <div className="flex pt-[13px]">
        {playback.map((item) => (
          <button key={item.name} type="button" aria-label={item.name} className="flex h-6 w-[42px] justify-center">
            <Svg w={24} h={24}>
              <path d={item.d} fill="#4e4e4e" stroke="#4e4e4e" strokeWidth="2" />
            </Svg>
          </button>
        ))}
      </div>
      <div className="relative ml-5 w-[520px]">
        <div className="grid grid-cols-13 *:mx-[3px] *:h-[7px]">
          <span className="bg-linear-to-r from-[#8e8efb] from-50% to-[#cdf57a] to-50%" />
          <span className="bg-[#8e8efb]" />
          <span className="col-span-9 bg-[#f7a469]" />
          <span className="bg-[#8e8efb]" />
          <span className="bg-[#6389e6]" />
        </div>
        <div className="mt-[5px] grid grid-cols-13 justify-items-center">
          {features.map((Icon, i) => (
            <button key={i} type="button" aria-label={`Feature ${i + 1}`}>
              <Icon />
            </button>
          ))}
        </div>
        <Svg w={520} h={22}>
          <path d="M20 15H501" stroke="#666" strokeWidth="3" />
          {features.slice(1).map((_, i) => (
            <path key={i} d={`M${60 + i * 40} 6v9`} stroke="#666" strokeWidth="3" />
          ))}
          <rect x="9" y="6" width="16" height="16" rx="2" fill="#c2cad6" stroke="#7b818c" strokeWidth="2" />
          <path d="M17 10v8M13 14h8" stroke="#111" strokeWidth="2" />
        </Svg>
        <Svg w={22} h={54} className="absolute -right-3 top-[3px]">
          <path d="M11 14v40" stroke="#5f5f5f" strokeWidth="3" />
          <path d="M0 0h22v10l-9 9H9l-9-9z" fill="#666" />
        </Svg>
      </div>
      <button type="button" aria-label="Timeline settings" className="ml-auto mt-[8px] self-start">
        <GearIcon />
      </button>
    </footer>
  );
}

export default function App() {
  return (
    <div className="flex h-screen flex-col overflow-hidden bg-[#ececec] font-['Noto_Sans',sans-serif] text-[19px] leading-6 text-[#3a3a3a]">
      <Gradients />
      <TitleBar />
      <DocumentTabs />
      <main className="relative min-h-0 flex-1">
        <SketchDrawing />
        <div className="relative flex h-full flex-col px-[7px] pb-2 pt-[7px]">
          <Toolbar />
          <div className="grid min-h-0 flex-1 grid-cols-[1fr_auto_1fr] pt-[7px]">
            <div className="flex flex-col justify-between">
              <BrowserPanel />
              <section className="w-[596px]">
                <PanelHeader title="COMMENTS" />
              </section>
            </div>
            <NavBar />
            <div className="flex min-h-0 flex-col items-end">
              <ViewCube />
              <SketchPalette />
            </div>
          </div>
        </div>
        <DimensionInputs />
      </main>
      <Timeline />
    </div>
  );
}
